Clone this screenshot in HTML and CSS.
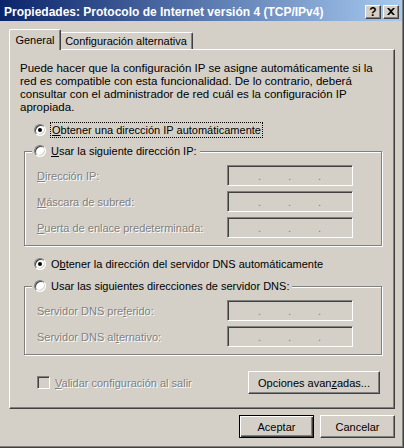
FILE: index.html
```html
<!DOCTYPE html>
<html lang="es">
<head>
<meta charset="utf-8">
<title>Propiedades: Protocolo de Internet versión 4 (TCP/IPv4)</title>
<link rel="stylesheet" href="styles.css">
</head>
<body>
<div class="window">
  <div class="titlebar">
    <span class="title">Propiedades: Protocolo de Internet versión 4 (TCP/IPv4)</span>
    <div class="caption-btns">
      <span class="cbtn help">?</span>
      <span class="cbtn close"><svg width="8" height="7" viewBox="0 0 8 7"><path d="M0 0h2l2 2 2-2h2L5 3.5 8 7H6L4 5 2 7H0l3-3.5z" fill="#000"/></svg></span>
    </div>
  </div>
  <div class="client">
    <div class="tabs">
      <div class="tab active">General</div>
      <div class="tab">Configuración alternativa</div>
    </div>
    <div class="panel">
      <p class="intro">Puede hacer que la configuración IP se asigne automáticamente si la<br>red es compatible con esta funcionalidad. De lo contrario, deberá<br>consultar con el administrador de red cuál es la configuración IP<br>apropiada.</p>

      <div class="option">
        <span class="radio checked"></span>
        <span class="focus"><u>O</u>btener una dirección IP automáticamente</span>
      </div>

      <div class="group">
        <div class="legend option">
          <span class="radio"></span>
          <span class="lbl"><u>U</u>sar la siguiente dirección IP:</span>
        </div>
        <div class="rows">
          <div class="row"><span class="dis"><u>D</u>irección IP:</span><span class="ipbox"><span class="seg"></span><span class="dot">.</span><span class="seg"></span><span class="dot">.</span><span class="seg"></span><span class="dot">.</span><span class="seg"></span></span></div>
          <div class="row"><span class="dis"><u>M</u>áscara de subred:</span><span class="ipbox"><span class="seg"></span><span class="dot">.</span><span class="seg"></span><span class="dot">.</span><span class="seg"></span><span class="dot">.</span><span class="seg"></span></span></div>
          <div class="row"><span class="dis"><u>P</u>uerta de enlace predeterminada:</span><span class="ipbox"><span class="seg"></span><span class="dot">.</span><span class="seg"></span><span class="dot">.</span><span class="seg"></span><span class="dot">.</span><span class="seg"></span></span></div>
        </div>
      </div>

      <div class="option dns-auto">
        <span class="radio checked"></span>
        <span class="lbl">O<u>b</u>tener la dirección del servidor DNS automáticamente</span>
      </div>

      <div class="group group-dns">
        <div class="legend option">
          <span class="radio"></span>
          <span class="lbl">Usar las si<u>g</u>uientes direcciones de servidor DNS:</span>
        </div>
        <div class="rows">
          <div class="row"><span class="dis">Servidor DNS pre<u>f</u>erido:</span><span class="ipbox"><span class="seg"></span><span class="dot">.</span><span class="seg"></span><span class="dot">.</span><span class="seg"></span><span class="dot">.</span><span class="seg"></span></span></div>
          <div class="row"><span class="dis">Servidor DNS al<u>t</u>ernativo:</span><span class="ipbox"><span class="seg"></span><span class="dot">.</span><span class="seg"></span><span class="dot">.</span><span class="seg"></span><span class="dot">.</span><span class="seg"></span></span></div>
        </div>
      </div>

      <div class="footer">
        <span class="check"></span>
        <span class="dis check-lbl"><u>V</u>alidar configuración al salir</span>
        <span class="btn adv">Opciones avan<u>z</u>adas...</span>
      </div>
    </div>
    <div class="dialog-buttons">
      <span class="btn default">Aceptar</span>
      <span class="btn">Cancelar</span>
    </div>
  </div>
</div>
</body>
</html>
```

FILE: styles.css
```css
* { box-sizing: border-box; }
html, body { margin: 0; padding: 0; }
body {
  background: #d4d0c8;
  font-family: "Liberation Sans", Arial, sans-serif;
  font-size: 11px;
  color: #000;
  overflow: hidden;
}
u { text-decoration: underline; text-underline-offset: 1px; }

.window {
  width: 404px;
  height: 448px;
  background: #d4d0c8;
  box-shadow: inset -1px -1px 0 #404040, inset -2px -2px 0 #808080;
}

.titlebar {
  height: 21px;
  margin-right: 2px;
  padding: 3px 3px 0 4px;
  display: flex;
  align-items: center;
  background: linear-gradient(to right, #0a246a, #a6caf0);
}
.title {
  flex: 1;
  color: #fff;
  font-weight: bold;
  font-size: 12px;
  white-space: nowrap;
}
.caption-btns { display: flex; gap: 2px; }
.cbtn {
  width: 16px;
  height: 14px;
  display: flex;
  align-items: center;
  justify-content: center;
  background: #d4d0c8;
  border: 1px solid;
  border-color: #fff #404040 #404040 #fff;
  box-shadow: inset -1px -1px 0 #808080;
  font-weight: bold;
  font-size: 12px;
  line-height: 12px;
  padding-bottom: 1px;
}

.client { padding: 8px 9px 0 9px; }

.tabs { display: flex; align-items: flex-end; height: 20px; }
.tab {
  height: 17px;
  width: 134px;
  text-align: center;
  line-height: 13px;
  padding-top: 2px;
  border-top: 1px solid #fff;
  border-left: 1px solid #fff;
  border-right: 1px solid #404040;
  box-shadow: inset -1px 0 0 #808080;
  border-radius: 2px 2px 0 0;
  background: #d4d0c8;
  white-space: nowrap;
}
.tab.active {
  position: relative;
  z-index: 1;
  width: 52px;
  height: 21px;
  padding-top: 4px;
  margin: 0 -2px -1px 0;
}

.panel {
  width: 386px;
  border: 1px solid;
  border-color: #fff #404040 #404040 #fff;
  box-shadow: inset -1px -1px 0 #808080;
  padding: 12px 10px 14px 10px;
}

.intro { margin: 0; line-height: 13px; font-size: 11.5px; white-space: nowrap; }

.option {
  display: flex;
  align-items: center;
  height: 16px;
  line-height: 13px;
  white-space: nowrap;
}
.panel > .option { margin: 8px 0 0 14px; }
.panel > .option.dns-auto { margin-top: 10px; }

.radio {
  width: 12px;
  height: 12px;
  flex: none;
  border-radius: 50%;
  background: #fff;
  border: 1px solid;
  border-color: #808080 #fff #fff #808080;
  box-shadow: inset 1px 1px 0 #404040, inset -1px -1px 0 #d4d0c8;
  display: flex;
  align-items: center;
  justify-content: center;
  margin-right: 4px;
}
.radio.checked::after {
  content: "";
  width: 4px;
  height: 4px;
  border-radius: 50%;
  background: #000;
}
.focus {
  border: 1px dotted #000;
  padding: 0 1px;
  line-height: 14px;
}
.lbl { padding-left: 1px; }

.group {
  margin: 13px 2px 0 4px;
  border: 1px solid #808080;
  box-shadow: inset 1px 1px 0 #fff, 1px 1px 0 #fff;
  padding: 0 28px 7px 12px;
}
.group-dns { margin-top: 14px; }
.legend {
  width: fit-content;
  margin: -9px 0 0 -5px;
  padding: 0 3px 0 2px;
  background: #d4d0c8;
}
.rows { display: flex; flex-direction: column; gap: 5px; margin-top: 6px; }
.row {
  display: flex;
  align-items: center;
  justify-content: space-between;
  height: 21px;
  white-space: nowrap;
}
.dis { color: #808080; text-shadow: 1px 1px 0 #fff; }

.ipbox {
  width: 126px;
  height: 21px;
  display: flex;
  align-items: flex-end;
  padding: 2px 0 0 2px;
  border: 1px solid;
  border-color: #808080 #fff #fff #808080;
  box-shadow: inset 1px 1px 0 #404040, inset -1px -1px 0 #d4d0c8;
  background: #d4d0c8;
}
.seg { width: 29px; }
.dot {
  width: 1px;
  display: flex;
  justify-content: center;
  color: #808080;
  line-height: 14px;
  margin-bottom: 2px;
}

.footer {
  display: flex;
  align-items: center;
  margin: 16px 4px 0 17px;
  height: 23px;
  white-space: nowrap;
}
.check {
  width: 13px;
  height: 13px;
  border: 1px solid;
  border-color: #808080 #fff #fff #808080;
  box-shadow: inset 1px 1px 0 #404040, inset -1px -1px 0 #d4d0c8;
  background: #d4d0c8;
  margin-right: 5px;
}
.check-lbl { flex: 1; }

.btn {
  display: flex;
  align-items: center;
  justify-content: center;
  width: 75px;
  height: 23px;
  border: 1px solid;
  border-color: #fff #404040 #404040 #fff;
  box-shadow: inset -1px -1px 0 #808080;
  background: #d4d0c8;
  white-space: nowrap;
}
.btn.adv { width: 132px; }
.btn.default {
  border: 1px solid #000;
  box-shadow: inset 1px 1px 0 #fff, inset -1px -1px 0 #404040, inset -2px -2px 0 #808080;
}

.dialog-buttons {
  display: flex;
  justify-content: flex-end;
  gap: 6px;
  margin-top: 6px;
}
```
